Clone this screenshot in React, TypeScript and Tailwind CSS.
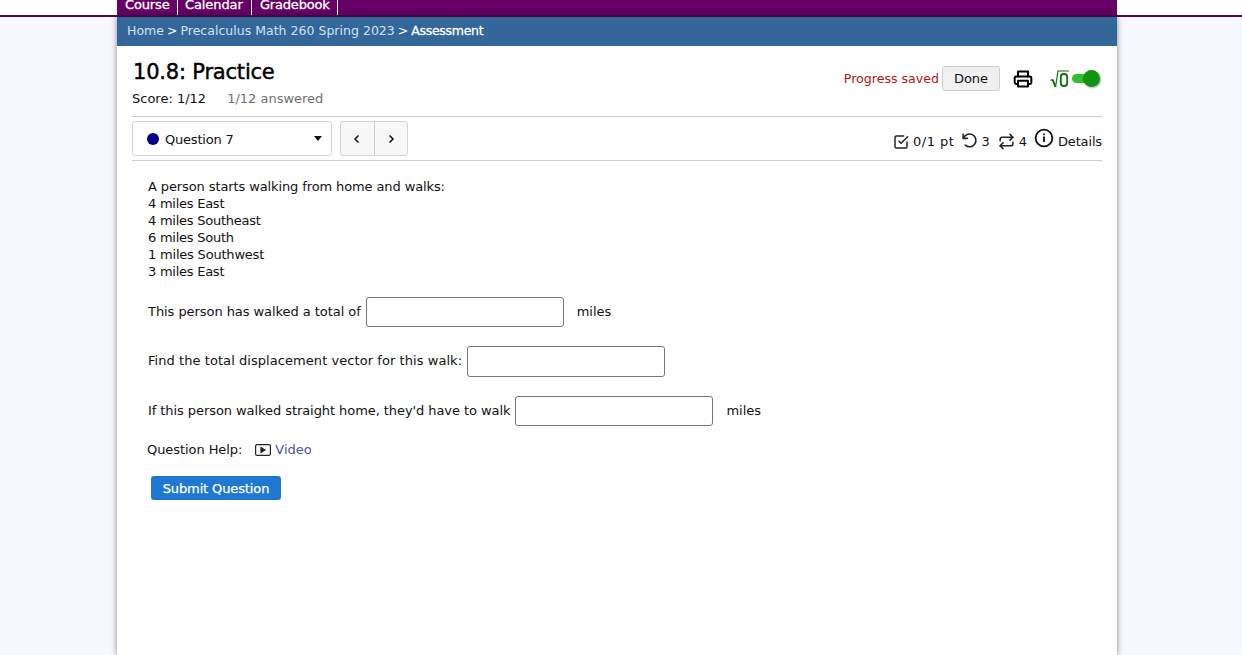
import React from "react";

const Field = ({ h = "h-[30px]" }: { h?: string }) => (
  <input type="text" className={`block w-[198px] ${h} rounded-[3px] border border-[#767676] bg-white`} />
);

export default function App() {
  return (
    <div className="h-[655px] overflow-hidden bg-[#f6f7ff] font-['DejaVu_Sans',sans-serif] text-[13px] text-[#111]">
      <header className="h-[17px] border-b-2 border-[#4a0a4f] bg-white">
        <nav className="ml-[117px] flex h-[15px] w-[1000px] overflow-hidden bg-[#660066] text-white [-webkit-text-stroke:0.3px_#fff]">
          <a className="block h-[15px] w-[61px] border-r border-white pl-[8px] leading-[9px] tracking-[-0.15px]">Course</a>
          <a className="block h-[15px] w-[74px] border-r border-white pl-[7px] leading-[9px] tracking-[-0.1px]">Calendar</a>
          <a className="block h-[15px] w-[86px] border-r border-white pl-[8px] leading-[9px] tracking-[-0.2px]">Gradebook</a>
        </nav>
      </header>
      <main className="ml-[117px] h-[638px] w-[1000px] bg-white shadow-[0_0_6px_rgba(0,0,0,0.45)]">
        <div className="flex h-[29px] items-center bg-[#336699] pb-[1px] pl-[10px] text-[12.5px] text-[#cfe2f7]">
          <span>Home</span>
          <span className="mx-[3px] text-white">&gt;</span>
          <span className="tracking-[0.02px]">Precalculus Math 260 Spring 2023</span>
          <span className="mx-[3px] text-white">&gt;</span>
          <span className="text-white tracking-[-0.3px] [-webkit-text-stroke:0.3px_#fff]">Assessment</span>
        </div>
        <div className="px-[15px]">
          <div className="flex h-[71px] items-start justify-between border-b border-[#cccccc]">
            <div>
              <h1 className="ml-px mt-[12px] text-[21px] leading-[28px] tracking-[-0.2px] text-black [-webkit-text-stroke:0.45px_#000]">10.8: Practice</h1>
              <div className="mt-[5px] flex leading-[16px]">
                <span>Score: 1/12</span>
                <span className="ml-[21px] text-[#707070]">1/12 answered</span>
              </div>
            </div>
            <div className="mt-[20px] flex items-center pr-[4px]">
              <span className="pt-[2px] text-[12.6px] text-[#b01515]">Progress saved</span>
              <button className="ml-[3px] h-[25px] w-[58px] rounded-[3px] border border-[#cfcfcf] bg-[#f0f0f0] pt-[1px] text-[#111]">Done</button>
              <svg className="ml-[13px]" width="20" height="20" viewBox="0 0 24 24" fill="none" stroke="#000" strokeWidth="2.4" strokeLinecap="round" strokeLinejoin="round">
                <path d="M6 9V3h12v6" />
                <path d="M6 18H4a2 2 0 0 1-2-2v-5a2 2 0 0 1 2-2h16a2 2 0 0 1 2 2v5a2 2 0 0 1-2 2h-2" />
                <path d="M6 14h12v7H6z" />
              </svg>
              <svg className="ml-[17px]" width="20" height="20" viewBox="0 0 20 20" fill="none" stroke="#0a6e0a">
                <path d="M0.5 11.5l2-1" strokeWidth="1.2" />
                <path d="M2.5 10.5 5.5 18" strokeWidth="2" />
                <path d="M5.5 18 8 2h11" strokeWidth="1.2" />
                <rect x="10.8" y="5" width="6.4" height="12" rx="3" strokeWidth="1.8" />
              </svg>
              <div className="relative ml-[2px] h-[9px] w-[23px] rounded-full bg-[#2fbf2f]">
                <span className="absolute right-[-5px] top-[-4px] h-[17px] w-[17px] rounded-full bg-[#0f950f] shadow-[1px_1px_2px_rgba(0,0,0,0.35)]" />
              </div>
              <span className="w-[3px]" />
            </div>
          </div>
          <div className="flex h-[44px] items-center justify-between border-b border-[#cccccc]">
            <div className="flex items-center">
              <div className="flex h-[35px] w-[200px] items-center rounded-[3px] border border-[#d4d4d4] bg-white pl-[14px] pr-[9px]">
                <span className="h-[12px] w-[12px] rounded-full bg-[#00008b]" />
                <span className="ml-[6px] flex-1 pt-[2px] tracking-[-0.2px]">Question 7</span>
                <span className="h-0 w-0 border-x-[4px] border-t-[5px] border-x-transparent border-t-[#111]" />
              </div>
              <div className="ml-[8px] flex h-[35px] w-[68px] rounded-[3px] border border-[#d4d4d4] bg-[#f7f7f7]">
                <button className="flex flex-1 items-center justify-center border-r border-[#cfcfcf]">
                  <svg width="10" height="10" viewBox="0 0 10 10" fill="none" stroke="#111" strokeWidth="1.5"><path d="M6.5 1.5 3 5l3.5 3.5" /></svg>
                </button>
                <button className="flex flex-1 items-center justify-center">
                  <svg width="10" height="10" viewBox="0 0 10 10" fill="none" stroke="#111" strokeWidth="1.5"><path d="M3.5 1.5 7 5 3.5 8.5" /></svg>
                </button>
              </div>
            </div>
            <div className="flex items-center pt-[6px]">
              <svg width="16" height="16" viewBox="0 0 24 24" fill="none" stroke="#222" strokeWidth="2.2" strokeLinecap="round" strokeLinejoin="round">
                <path d="m9 11 3 3L22 4" />
                <path d="M21 12v7a2 2 0 0 1-2 2H5a2 2 0 0 1-2-2V5a2 2 0 0 1 2-2h11" />
              </svg>
              <span className="ml-[4px] tracking-[0.5px]">0/1 pt</span>
              <svg className="mb-[2px] ml-[7px]" width="17" height="17" viewBox="0 0 24 24" fill="none" stroke="#222" strokeWidth="2.2" strokeLinecap="round" strokeLinejoin="round">
                <path d="M3 3v6h6" />
                <path d="M3.5 9A9 9 0 1 1 6 18.5" />
              </svg>
              <span className="ml-[3px]">3</span>
              <svg className="ml-[8px]" width="17" height="17" viewBox="0 0 24 24" fill="none" stroke="#222" strokeWidth="2.2" strokeLinecap="round" strokeLinejoin="round">
                <path d="m17 2 4 4-4 4" />
                <path d="M3 11V9a3 3 0 0 1 3-3h15" />
                <path d="m7 22-4-4 4-4" />
                <path d="M21 13v2a3 3 0 0 1-3 3H3" />
              </svg>
              <span className="ml-[4px]">4</span>
              <svg className="mb-[7px] ml-[7px]" width="20" height="20" viewBox="0 0 24 24" fill="none" stroke="#111" strokeWidth="2.2" strokeLinecap="round">
                <circle cx="12" cy="12" r="10" />
                <path d="M12 16v-5M12 7.5v.2" />
              </svg>
              <span className="ml-[4px] tracking-[-0.15px]">Details</span>
            </div>
          </div>
          <div className="pl-[16px] pt-[17px]">
            <p className="leading-[17px]">
              <span className="tracking-[-0.11px]">A person starts walking from home and walks:</span><br />
              <span className="tracking-[-0.25px]">4 miles East</span><br />
              <span className="tracking-[-0.25px]">4 miles Southeast</span><br />
              <span className="tracking-[-0.25px]">6 miles South</span><br />
              <span className="tracking-[-0.2px]">1 miles Southwest</span><br />
              <span className="tracking-[-0.25px]">3 miles East</span>
            </p>
            <div className="mt-[17px] flex h-[30px] items-center">
              <span className="tracking-[-0.06px]">This person has walked a total of</span>
              <span className="ml-[5px]"><Field /></span>
              <span className="ml-[13px]">miles</span>
            </div>
            <div className="mt-[19px] flex h-[31px] items-center">
              <span className="pb-[1px] tracking-[0.06px]">Find the total displacement vector for this walk:</span>
              <span className="ml-[5px]"><Field h="h-[31px]" /></span>
            </div>
            <div className="mt-[19px] flex h-[30px] items-center">
              <span className="tracking-[-0.07px]">If this person walked straight home, they'd have to walk</span>
              <span className="ml-[5px]"><Field /></span>
              <span className="ml-[13px]">miles</span>
            </div>
            <div className="-ml-px mt-[15px] flex h-[17px] items-center">
              <span className="tracking-[-0.07px]">Question Help:</span>
              <svg className="ml-[13px]" width="16" height="14" viewBox="0 0 16 14" fill="none" stroke="#222" strokeWidth="1.2">
                <rect x="0.6" y="1.6" width="14.8" height="10.8" rx="1.5" />
                <path d="M6 4.5v5l4-2.5z" fill="#222" />
              </svg>
              <a className="ml-[4px] text-[#4f4fa8]">Video</a>
            </div>
            <button className="ml-[3px] mt-[18px] block h-[24px] w-[130px] rounded-[3px] bg-[#1f78d1] pt-[1px] tracking-[-0.12px] text-white [-webkit-text-stroke:0.25px_#fff]">Submit Question</button>
          </div>
        </div>
      </main>
    </div>
  );
}
